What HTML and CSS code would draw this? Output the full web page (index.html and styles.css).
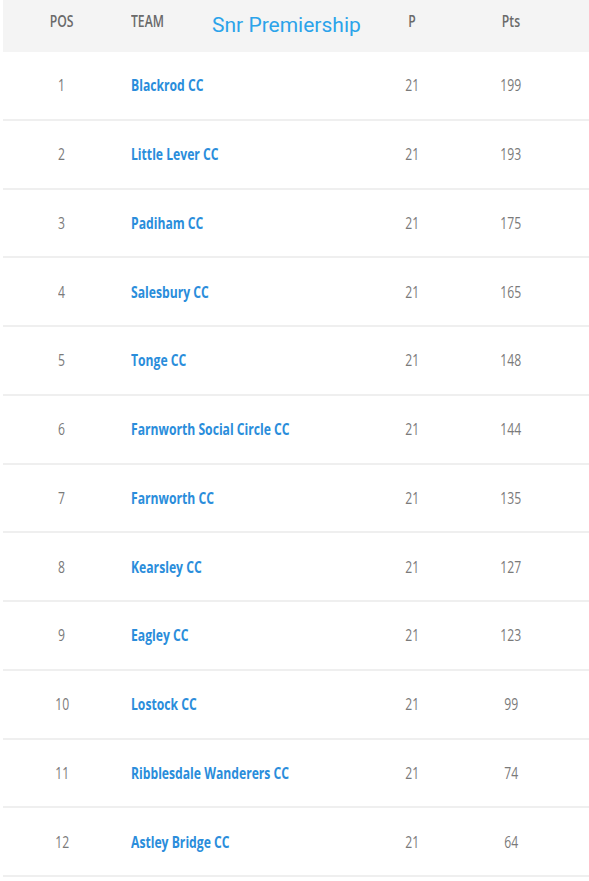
FILE: index.html
```html
<!DOCTYPE html>
<html>
<head>
<meta charset="utf-8">
<link rel="stylesheet" href="styles.css">
</head>
<body>
<div class="table">
  <div class="head">
    <div class="cell pos"><span class="c">POS</span></div>
    <div class="cell team"><span class="c">TEAM</span></div>
    <div class="cell num"><span class="c">P</span></div>
    <div class="cell num"><span class="c">Pts</span></div>
    <div class="title">Snr Premiership</div>
  </div>
  <div class="row"><div class="cell pos"><span class="c">1</span></div><div class="cell team"><span class="c">Blackrod CC</span></div><div class="cell num"><span class="c">21</span></div><div class="cell num"><span class="c">199</span></div></div>
  <div class="row"><div class="cell pos"><span class="c">2</span></div><div class="cell team"><span class="c">Little Lever CC</span></div><div class="cell num"><span class="c">21</span></div><div class="cell num"><span class="c">193</span></div></div>
  <div class="row"><div class="cell pos"><span class="c">3</span></div><div class="cell team"><span class="c">Padiham CC</span></div><div class="cell num"><span class="c">21</span></div><div class="cell num"><span class="c">175</span></div></div>
  <div class="row"><div class="cell pos"><span class="c">4</span></div><div class="cell team"><span class="c">Salesbury CC</span></div><div class="cell num"><span class="c">21</span></div><div class="cell num"><span class="c">165</span></div></div>
  <div class="row"><div class="cell pos"><span class="c">5</span></div><div class="cell team"><span class="c">Tonge CC</span></div><div class="cell num"><span class="c">21</span></div><div class="cell num"><span class="c">148</span></div></div>
  <div class="row"><div class="cell pos"><span class="c">6</span></div><div class="cell team"><span class="c">Farnworth Social Circle CC</span></div><div class="cell num"><span class="c">21</span></div><div class="cell num"><span class="c">144</span></div></div>
  <div class="row"><div class="cell pos"><span class="c">7</span></div><div class="cell team"><span class="c">Farnworth CC</span></div><div class="cell num"><span class="c">21</span></div><div class="cell num"><span class="c">135</span></div></div>
  <div class="row"><div class="cell pos"><span class="c">8</span></div><div class="cell team"><span class="c">Kearsley CC</span></div><div class="cell num"><span class="c">21</span></div><div class="cell num"><span class="c">127</span></div></div>
  <div class="row"><div class="cell pos"><span class="c">9</span></div><div class="cell team"><span class="c">Eagley CC</span></div><div class="cell num"><span class="c">21</span></div><div class="cell num"><span class="c">123</span></div></div>
  <div class="row"><div class="cell pos"><span class="c">10</span></div><div class="cell team"><span class="c">Lostock CC</span></div><div class="cell num"><span class="c">21</span></div><div class="cell num"><span class="c">99</span></div></div>
  <div class="row"><div class="cell pos"><span class="c">11</span></div><div class="cell team"><span class="c">Ribblesdale Wanderers CC</span></div><div class="cell num"><span class="c">21</span></div><div class="cell num"><span class="c">74</span></div></div>
  <div class="row"><div class="cell pos"><span class="c">12</span></div><div class="cell team"><span class="c">Astley Bridge CC</span></div><div class="cell num"><span class="c">21</span></div><div class="cell num"><span class="c">64</span></div></div>
</div>
</body>
</html>
```
FILE: styles.css
```css
html, body {
  margin: 0;
  padding: 0;
  background: #ffffff;
}
body {
  font-family: "Open Sans", "Liberation Sans", sans-serif;
  overflow: hidden;
}
.table {
  margin-left: 3px;
  width: 586px;
}
.head, .row {
  display: grid;
  grid-template-columns: 118px 241px 100px 98px 1fr;
}
.head {
  position: relative;
  height: 52px;
  background: #f4f4f4;
  align-items: start;
  padding-top: 10px;
  box-sizing: border-box;
  color: #6a6a6a;
  font-size: 16px;
  line-height: 22px;
  font-weight: 600;
}
.row {
  height: 68.75px;
  box-sizing: border-box;
  border-bottom: 2px solid #efefef;
  align-items: center;
  font-size: 16px;
  line-height: 22px;
  color: #7a7a7a;
}
.cell {
  white-space: nowrap;
}
.pos, .num {
  text-align: center;
}
.team {
  padding-left: 10px;
}
.c {
  display: inline-block;
  transform: scaleX(0.76);
  transform-origin: center;
}
.team .c {
  transform-origin: left center;
}
.row .team {
  color: #2a8ddb;
  font-weight: 700;
}
.title {
  position: absolute;
  left: 209px;
  top: 13px;
  font-family: Roboto, "Liberation Sans", sans-serif;
  font-size: 21px;
  line-height: 25px;
  font-weight: 400;
  color: #2ba3ea;
}
```
